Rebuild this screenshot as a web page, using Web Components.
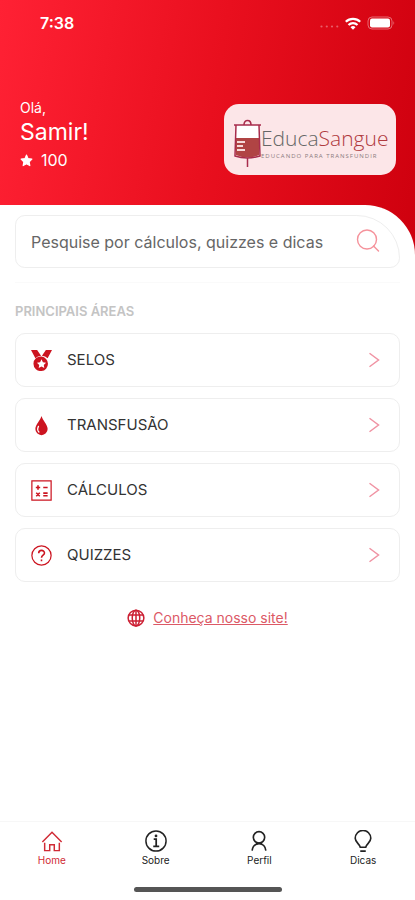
<!DOCTYPE html>
<html lang="pt-BR">
<head>
<meta charset="utf-8">
<meta name="viewport" content="width=device-width, initial-scale=1">
<title>EducaSangue</title>
<style>
  body {
    margin: 0;
    background: #fff;
    color: #333;
    font-family: Inter, "Liberation Sans", sans-serif;
  }
</style>
</head>
<body>
<app-shell>
  <app-header slot="header" name="Samir!" points="100"></app-header>
  <search-box placeholder="Pesquise por cálculos, quizzes e dicas"></search-box>
  <area-list heading="Principais áreas">
    <area-item icon="medal">SELOS</area-item>
    <area-item icon="drop">TRANSFUSÃO</area-item>
    <area-item icon="calc">CÁLCULOS</area-item>
    <area-item icon="question">QUIZZES</area-item>
  </area-list>
  <site-link href="#site">Conheça nosso site!</site-link>
  <tab-bar slot="footer">
    <tab-item icon="home" active>Home</tab-item>
    <tab-item icon="info">Sobre</tab-item>
    <tab-item icon="person">Perfil</tab-item>
    <tab-item icon="bulb">Dicas</tab-item>
  </tab-bar>
</app-shell>

<script>
(function () {
  'use strict';

  // All icons are drawn on a 24x24 grid
  const ICONS = {
    star: '<path fill="currentColor" stroke="currentColor" stroke-width="2" stroke-linejoin="round" d="M12 2l3 6.500 7 1-5 5 1.200 7L12 18l-6.200 3.500 1.200-7-5-5 7-1z"/>',
    medal: '<g fill="currentColor"><path d="M0 0h7l4.500 6.500A9 9 0 0 0 5 9.500zM24 0h-7l-4.500 6.500A9 9 0 0 1 19 9.500z"/><path fill-rule="evenodd" d="M12 7.500a8.300 8.300 0 1 0 0 16.500 8.300 8.300 0 0 0 0-16.500zm0 3.200l1.600 3.300 3.600.5-2.600 2.500.6 3.600-3.200-1.700-3.200 1.700.6-3.600-2.600-2.500 3.600-.5z"/></g>',
    drop: '<path fill="currentColor" d="M12 1c1.200 5 7 9.500 7 15a7 7 0 0 1-14 0c0-5.500 5.800-10 7-15z"/><path d="M8.500 13c-1.500 3-1 5 .5 6.500" fill="none" stroke="#fff" stroke-width="1.500" stroke-linecap="round"/>',
    calc: '<g fill="none" stroke="currentColor" stroke-width="1.400"><path d="M1 1h22v22H1z"/><path stroke-width="1.800" d="M5.500 8.500h5M8 6v5M14 8.500h5M6 14.500l4 4M10 14.500l-4 4M14 15h5M14 18h5"/></g>',
    question: '<g fill="none" stroke="currentColor" stroke-width="1.400"><circle cx="12" cy="12" r="11"/><path stroke-width="1.800" d="M8.800 9.500c0-4.500 6.600-4.300 6.600-.3 0 2.500-3.400 2.500-3.400 5.300M12 16.500v2"/></g>',
    chevron: '<path fill="none" stroke="currentColor" stroke-width="2" d="M6 3l12 9-12 9"/>',
    search: '<g fill="none" stroke="currentColor" stroke-width="1.400" stroke-linecap="round"><circle cx="11" cy="10.500" r="9.500"/><path d="M17.500 17l5 5"/></g>',
    globe: '<g fill="none" stroke="currentColor" stroke-width="2"><circle cx="12" cy="12" r="10.500"/><ellipse cx="12" cy="12" rx="5" ry="10.500"/><path d="M12 1.500v21M2.500 8h19M2.500 16h19"/></g>',
    home: '<g fill="none" stroke="currentColor" stroke-width="1.600"><path d="M1.500 13L12 2.500 22.500 13"/><path d="M4 14v8.500h5.500V16h5v6.500H20V14"/></g>',
    info: '<g fill="none" stroke="currentColor" stroke-width="1.600"><circle cx="12" cy="12" r="11"/><path d="M9.500 10h2.700v7.500M9 17.800h6.500" stroke-width="1.900"/></g><circle cx="12" cy="6.500" r="1.500" fill="currentColor"/>',
    person: '<g fill="none" stroke="currentColor" stroke-width="1.800"><circle cx="12" cy="8" r="6.200"/><path d="M4.500 22.500c.5-4 3-7.500 7.500-7.500s7 3.500 7.500 7.500M8.500 14.500h7"/></g>',
    bulb: '<g fill="none" stroke="currentColor" stroke-width="1.800"><path d="M9 18.800C8.500 15.500 3.500 13.500 3.500 9a8.500 8.500 0 0 1 17 0c0 4.500-5 6.500-5.500 9.800zM9 23h6"/></g>'
  };

  const icon = (name, size) =>
    `<svg width="${size}" height="${size}" viewBox="0 0 24 24" aria-hidden="true">${ICONS[name] || ''}</svg>`;

  class BaseElement extends HTMLElement {
    connectedCallback() {
      if (this.shadowRoot) return;
      this.attachShadow({ mode: 'open' }).innerHTML = this.render();
    }
  }

  class AppShell extends BaseElement {
    render() {
      return `
        <style>
          :host { display: flex; flex-direction: column; min-height: 100vh; }
          main {
            flex: 1;
            display: flex;
            flex-direction: column;
            margin-top: -56px;
            padding: 10px 15px 24px;
            border-top-right-radius: 50px;
            background: #fff;
          }
        </style>
        <slot name="header"></slot>
        <main><slot></slot></main>
        <slot name="footer"></slot>
      `;
    }
  }

  class StatusBar extends BaseElement {
    render() {
      return `
        <style>
          :host {
            display: flex;
            align-items: center;
            justify-content: space-between;
            padding: 12px 20px 0 40px;
            font-size: 16px;
            line-height: 22px;
            font-weight: 600;
          }
          .signals { display: flex; align-items: center; gap: 6px; }
        </style>
        <span>7:38</span>
        <span class="signals">
          <svg width="19" height="14" viewBox="0 0 19 14" fill="#fff" opacity=".35" aria-hidden="true">
            <circle cx="1.500" cy="10.500" r="1.100"/><circle cx="6.800" cy="10.500" r="1.100"/>
            <circle cx="12" cy="10.500" r="1.100"/><circle cx="17.300" cy="10.500" r="1.100"/>
          </svg>
          <svg width="16" height="13" viewBox="0 0 16 13" aria-hidden="true">
            <g fill="none" stroke="#fff" stroke-width="2.200">
              <path d="M.8 4.800a10.300 10.300 0 0 1 14.400 0M3.500 8a6.400 6.400 0 0 1 9 0"/>
            </g>
            <path fill="#fff" d="M8 12.800L5.500 10.200a3.600 3.600 0 0 1 5 0z"/>
          </svg>
          <svg width="28" height="14" viewBox="0 0 28 14" aria-hidden="true">
            <rect x="1" y="1" width="24" height="12" rx="4" fill="none" stroke="#fff" stroke-opacity=".4"/>
            <rect x="3" y="2.500" width="20" height="9" rx="2" fill="#fff"/>
            <path d="M26.500 5v4q1.500-2 0-4z" fill="#fff" opacity=".5"/>
          </svg>
        </span>
      `;
    }
  }

  class BrandCard extends BaseElement {
    render() {
      return `
        <style>
          :host {
            box-sizing: border-box;
            display: flex;
            align-items: center;
            width: 172px;
            height: 71px;
            padding: 8px 8px 0 10px;
            border-radius: 15px;
            background: #fce6e8;
          }
          svg { flex: none; }
          .brand { display: flex; flex-direction: column; margin-bottom: 4px; }
          .name {
            color: #666;
            font: 300 21px/28px "Open Sans", "Noto Sans", sans-serif;
          }
          .name b { color: #b03a3e; font-weight: 300; }
          .tagline {
            color: #8a7b7e;
            font: 6px/8px "Open Sans", "Noto Sans", sans-serif;
            letter-spacing: 1px;
            white-space: nowrap;
          }
        </style>
        <svg width="27" height="50" viewBox="0 0 27 50" aria-hidden="true">
          <path d="M10 6c0-6 7-6 7 0" fill="none" stroke="#a82c4c" stroke-width="1.600"/>
          <path d="M2 6h23v29q-11 6-23 0z" fill="#fff"/>
          <path d="M2 19h23v17q-11 5-23 0z" fill="#b04444"/>
          <path d="M0 6h27M2 6L1 37q12 4 25 0L25 6M13.500 39v9" fill="none" stroke="#a82c4c" stroke-width="1.500"/>
          <path d="M3 23h8M3 27h6M3 31h8" stroke="#f6dada" stroke-width="2"/>
        </svg>
        <span class="brand">
          <span class="name">Educa<b>Sangue</b></span>
          <span class="tagline">EDUCANDO PARA TRANSFUNDIR</span>
        </span>
      `;
    }
  }

  class AppHeader extends BaseElement {
    render() {
      return `
        <style>
          :host {
            display: block;
            padding-bottom: 86px;
            background: linear-gradient(100deg, #ff2134, #e90f1e 50%, #ce000e);
            color: #fff;
          }
          .row {
            display: flex;
            align-items: flex-end;
            justify-content: space-between;
            padding: 64px 19px 0 20px;
          }
          .user { display: flex; flex-direction: column; margin-bottom: 1px; }
          .hello { font-size: 14px; line-height: 20px; }
          .name { font-size: 23px; line-height: 28px; }
          .points {
            display: flex;
            align-items: center;
            gap: 8px;
            font-size: 16px;
            line-height: 28px;
          }
        </style>
        <status-bar></status-bar>
        <div class="row">
          <div class="user">
            <span class="hello">Olá,</span>
            <span class="name">${this.getAttribute('name')}</span>
            <span class="points">${icon('star', 13)}${this.getAttribute('points')}</span>
          </div>
          <brand-card></brand-card>
        </div>
      `;
    }
  }

  class SearchBox extends BaseElement {
    render() {
      const text = this.getAttribute('placeholder');
      return `
        <style>
          :host {
            display: block;
            padding-bottom: 14px;
            border-bottom: 1px solid #fafafa;
          }
          form {
            display: flex;
            align-items: center;
            height: 51px;
            margin: 0;
            padding: 0 19px 0 15px;
            border: 1px solid #eee;
            border-radius: 10px 44px 10px 10px;
          }
          input {
            flex: 1;
            min-width: 0;
            padding: 0;
            border: 0;
            outline: 0;
            background: none;
            color: #666;
            font: 16px/24px Inter, "Liberation Sans", sans-serif;
          }
          input::placeholder { color: #666; opacity: 1; }
          button {
            display: flex;
            padding: 0 0 2px;
            border: 0;
            background: none;
            color: #f5929b;
          }
        </style>
        <form>
          <input type="search" aria-label="${text}" placeholder="${text}">
          <button type="button" aria-label="Pesquisar">${icon('search', 24)}</button>
        </form>
      `;
    }
  }

  class AreaList extends BaseElement {
    render() {
      return `
        <style>
          :host { display: flex; flex-direction: column; gap: 11px; }
          h2 {
            margin: 20px 0 3px;
            color: #c4c4c4;
            font-size: 13px;
            line-height: 16px;
            font-weight: 600;
            text-transform: uppercase;
          }
        </style>
        <h2>${this.getAttribute('heading')}</h2>
        <slot></slot>
      `;
    }
  }

  class AreaItem extends BaseElement {
    render() {
      const name = this.getAttribute('icon');
      return `
        <style>
          :host { display: block; }
          button {
            box-sizing: border-box;
            display: flex;
            align-items: center;
            gap: 15px;
            width: 100%;
            height: 54px;
            padding: 0 16px 0 15px;
            border: 1px solid #eee;
            border-radius: 10px;
            background: #fff;
            color: #333;
            font: 15px/20px Inter, "Liberation Sans", sans-serif;
            text-align: left;
          }
          .icon { display: flex; justify-content: center; width: 21px; color: #cc1420; }
          .label { flex: 1; }
          .chevron { display: flex; color: #f093a3; }
        </style>
        <button type="button">
          <span class="icon">${icon(name, 21)}</span>
          <span class="label"><slot></slot></span>
          <span class="chevron">${icon('chevron', 18)}</span>
        </button>
      `;
    }
  }

  class SiteLink extends BaseElement {
    render() {
      return `
        <style>
          :host {
            display: flex;
            align-items: center;
            justify-content: center;
            gap: 8px;
            margin-top: 26px;
            color: #cc1f33;
          }
          a { color: #dc5966; font-size: 14px; line-height: 20px; }
        </style>
        ${icon('globe', 18)}
        <a href="${this.getAttribute('href')}"><slot></slot></a>
      `;
    }
  }

  class TabBar extends BaseElement {
    render() {
      return `
        <style>
          :host { display: block; border-top: 1px solid #f7f7f7; }
          nav { display: flex; height: 65px; }
          .indicator {
            width: 148px;
            height: 5px;
            margin: 0 auto 8px;
            border-radius: 3px;
            background: #555;
          }
        </style>
        <nav><slot></slot></nav>
        <div class="indicator"></div>
      `;
    }
  }

  class TabItem extends BaseElement {
    render() {
      return `
        <style>
          :host { flex: 1; display: block; color: #222; }
          :host([active]) { color: #d02a35; }
          a {
            display: flex;
            flex-direction: column;
            align-items: center;
            gap: 2px;
            padding-top: 8px;
            color: inherit;
            font-size: 10px;
            line-height: 12px;
            text-decoration: none;
          }
        </style>
        <a href="#${this.getAttribute('icon')}">${icon(this.getAttribute('icon'), 22)}<span><slot></slot></span></a>
      `;
    }
  }

  customElements.define('status-bar', StatusBar);
  customElements.define('brand-card', BrandCard);
  customElements.define('app-header', AppHeader);
  customElements.define('search-box', SearchBox);
  customElements.define('area-list', AreaList);
  customElements.define('area-item', AreaItem);
  customElements.define('site-link', SiteLink);
  customElements.define('tab-bar', TabBar);
  customElements.define('tab-item', TabItem);
  customElements.define('app-shell', AppShell);
})();
</script>
</body>
</html>
